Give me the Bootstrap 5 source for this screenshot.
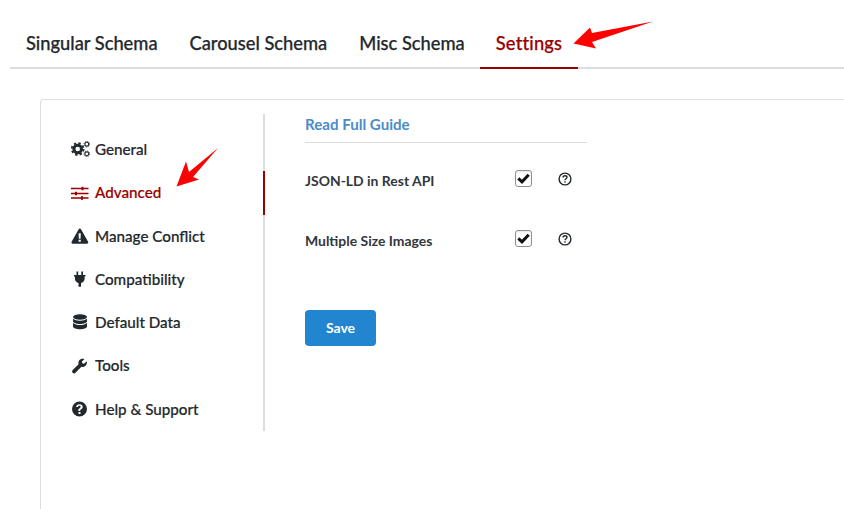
<!DOCTYPE html>
<html lang="en"><head><meta charset="utf-8"><title>Settings</title>
<link rel="stylesheet" href="https://cdn.jsdelivr.net/npm/bootstrap@5.3.0/dist/css/bootstrap.min.css">
<style>
html,body{height:509px;overflow:hidden;background:#fff}
body{font-family:Lato,"Liberation Sans",sans-serif;color:#23282d;position:relative}
.tabbar{margin:20px 0 0 10px;height:49px;border-bottom:2px solid #ddd}
.tabbar a{display:block;height:49px;padding:0 16px;line-height:47px;font-size:18.3px;font-weight:500;color:#23282d;text-decoration:none;-webkit-text-stroke:.25px currentColor}
.tabbar a.on{color:#900;border-bottom:2px solid #900;letter-spacing:.2px;width:98px;margin-left:-1px;white-space:nowrap}
.panel-box{margin:30px -20px 0 40px;height:410px;border:1px solid #ddd;border-bottom:0;border-radius:4px 0 0 0;padding-top:14px}
.side{width:224px;height:317px;border-right:2px solid #ddd;padding:13.8px 0 0 30px}
.side a{display:flex;align-items:center;height:43.25px;font-size:15.2px;font-weight:500;color:#23282d;text-decoration:none;position:relative;-webkit-text-stroke:.2px currentColor}
.side a.on{color:#900}
.side a.on::after{content:"";position:absolute;right:-2px;top:0;width:2px;height:44px;background:#900}
.ico{width:19px;height:16px;margin-right:5px;fill:currentColor;flex:none}
.ico.gears{fill:none;stroke:currentColor}
.main-col{margin-left:40px;width:282px}
.guide{display:block;height:29px;border-bottom:1px solid #ddd;font-size:15.1px;font-weight:700;color:#4a8cca;text-decoration:none;line-height:21px}
.opt{height:60px;font-size:13.95px;font-weight:700;color:#32373c}
.opt-first{margin-top:5px}
.opt .lbl{width:210px;padding-top:6px}
.tick{width:17px;height:17px;border:1px solid #8c8f94;border-radius:3px;background:#fff;display:flex;align-items:center;justify-content:center;box-shadow:inset 0 1px 2px rgba(0,0,0,.1)}
.qm{width:14px;height:14px;margin:2px 0 0 26px}
.savebtn{margin-top:42px;width:71px;height:36px;background:#2185d0;border:0;border-radius:4px;color:#fff;font-size:14px;font-weight:700;padding:0 0 2px}
.note{position:absolute;left:0;top:0;pointer-events:none}
</style></head><body>
<nav class="tabbar d-flex">
<a href="#">Singular Schema</a><a href="#">Carousel Schema</a><a href="#">Misc Schema</a><a href="#" class="on">Settings</a>
</nav>
<div class="panel-box d-flex">
<div class="side">
<a href="#"><svg class="ico gears" viewBox="0 0 19 16"><circle cx="6.700" cy="8" r="3.800" stroke-width="3"/><circle cx="6.700" cy="8" r="5.900" stroke-width="1.800" stroke-dasharray="2.400 2.230"/><circle cx="15.800" cy="3.200" r="1.900" stroke-width="1.100"/><circle cx="15.800" cy="3.200" r="2.800" stroke-width=".9" stroke-dasharray="1.200 1"/><circle cx="15.800" cy="12.800" r="1.900" stroke-width="1.100"/><circle cx="15.800" cy="12.800" r="2.800" stroke-width=".9" stroke-dasharray="1.200 1"/></svg>General</a>
<a href="#" class="on"><svg class="ico" viewBox="0 0 19 16"><path d="M0 2.700h17.500v1.500H0zM0 7.700h17.500v1.500H0zM0 12.300h17.500v1.500H0z"/><path d="M10.500 1.700h2v3.500h-2zM4 6.700h2v3.500H4zM10 11.300h2v3.500h-2z"/></svg>Advanced</a>
<a href="#"><svg class="ico" viewBox="0 0 19 16"><path fill-rule="evenodd" d="M8.700.5c.5 0 1 .3 1.300.7l7.100 12.600c.5.900-.1 1.900-1.100 1.900H1.700c-1 0-1.600-1-1.100-1.900l7.100-12.600c.3-.4.500-.7 1-.7zM7.600 5.300l.2 5.400h1.800l.2-5.400zM7.600 11.800v2h2.200v-2z"/></svg>Manage Conflict</a>
<a href="#"><svg class="ico" viewBox="0 0 19 16"><path d="M5.500.5h1.700v4H5.500zM10.300.5H12v4h-1.700zM3 4h11.500v1.500h-.9v2.300c0 2.100-1.600 3.800-3.600 4.100V15.800H7.500v-3.900c-2-.3-3.600-2-3.600-4.100V5.500H3z"/></svg>Compatibility</a>
<a href="#"><svg class="ico" viewBox="0 0 19 16"><ellipse cx="9" cy="3" rx="7" ry="2.800"/><path d="M2 4.800v2.400c0 1.500 3.100 2.800 7 2.800s7-1.300 7-2.800V4.800c-1.400 1.300-4.100 2-7 2s-5.600-.7-7-2zM2 9v3.500c0 1.500 3.100 2.800 7 2.800s7-1.300 7-2.800V9c-1.400 1.300-4.100 2.100-7 2.100S3.400 10.300 2 9z"/></svg>Default Data</a>
<a href="#"><svg class="ico" viewBox="0 0 19 16"><path d="M15.800 3.200 13 5.700l-1.700-.4-.4-1.700L13.500 1c-1.800-.7-3.800-.2-5 1-1 1.200-1.400 2.800-.9 4.200L1.700 12c-.8.800-.8 2 0 2.800.8.800 2 .8 2.800 0l5.900-6c1.400.4 3-.1 4.100-1.100 1.200-1.200 1.800-2.800 1.300-4.500z"/></svg>Tools</a>
<a href="#"><svg class="ico" viewBox="0 0 19 16"><path fill-rule="evenodd" d="M8.500.5a7.500 7.500 0 1 1 0 15 7.500 7.500 0 0 1 0-15zM7.500 11v2h2v-2zM8.500 3.200c-2 0-3.300 1-3.400 2.900H7c.1-.9.600-1.300 1.400-1.300s1.300.4 1.300 1c0 .6-.4.9-1.100 1.400-.9.600-1.300 1.200-1.300 2.100v.6h1.900v-.4c0-.5.200-.8 1-1.300.9-.6 1.500-1.300 1.500-2.500 0-1.500-1.200-2.500-3.200-2.500z"/></svg>Help &amp; Support</a>
</div>
<div class="main-col">
<a href="#" class="guide">Read Full Guide</a>
<div class="opt opt-first d-flex align-items-center"><span class="lbl">JSON-LD in Rest API</span><span class="tick"><svg width="13" height="11" viewBox="0 0 13 11"><path d="M1.300 5.300 5 8.800 11.700 1.800" fill="none" stroke="#111" stroke-width="3"/></svg></span><svg class="qm" viewBox="0 0 14 14"><circle cx="7" cy="7" r="5.900" fill="none" stroke="#23282d" stroke-width="1.400"/><path d="M5 5.500c0-1.200.9-1.800 2-1.800s2 .6 2 1.600c0 1.500-2 1.400-2 3" fill="none" stroke="#23282d" stroke-width="1.400"/><rect x="6.300" y="9.300" width="1.400" height="1.400" fill="#23282d"/></svg></div>
<div class="opt d-flex align-items-center"><span class="lbl">Multiple Size Images</span><span class="tick"><svg width="13" height="11" viewBox="0 0 13 11"><path d="M1.300 5.300 5 8.800 11.700 1.800" fill="none" stroke="#111" stroke-width="3"/></svg></span><svg class="qm" viewBox="0 0 14 14"><circle cx="7" cy="7" r="5.900" fill="none" stroke="#23282d" stroke-width="1.400"/><path d="M5 5.500c0-1.200.9-1.800 2-1.800s2 .6 2 1.600c0 1.500-2 1.400-2 3" fill="none" stroke="#23282d" stroke-width="1.400"/><rect x="6.300" y="9.300" width="1.400" height="1.400" fill="#23282d"/></svg></div>
<button type="button" class="btn savebtn">Save</button>
</div>
</div>
<svg class="note" width="844" height="509" viewBox="0 0 844 509"><path fill="#f00" d="M573.500 43.500 590 27.500 592 33 653 21.500 592 42 596 48.500zM176.500 186.500 186 161.500 189 172 218 148 193 177 199 179.500z"/></svg>
</body></html>
